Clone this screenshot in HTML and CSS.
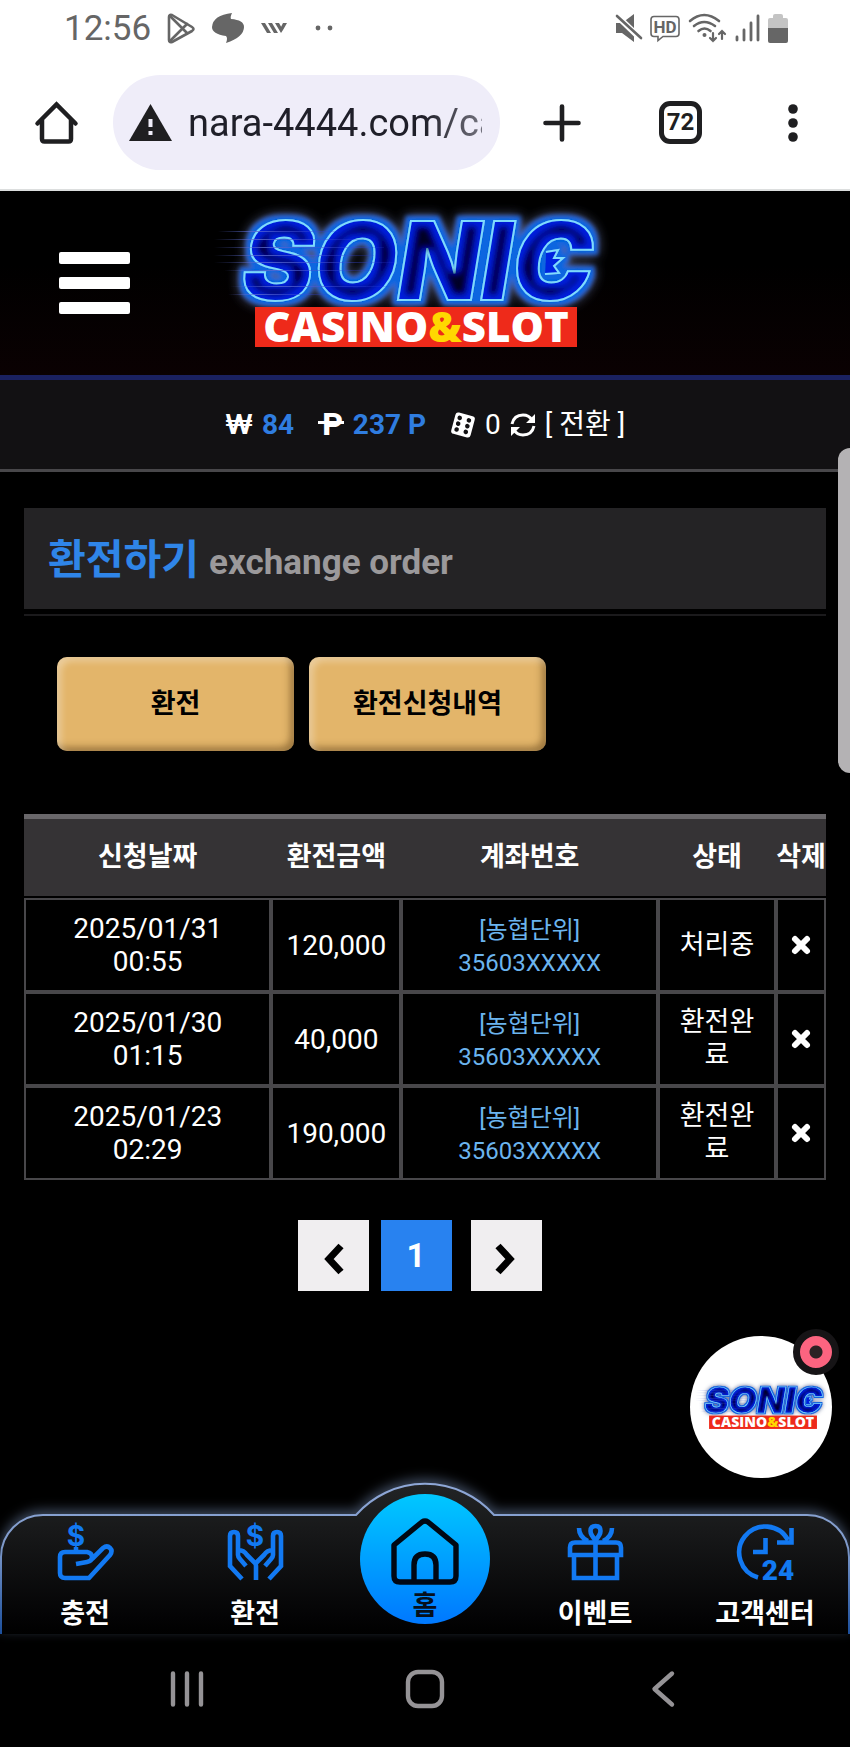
FILE: index.html
```html
<!DOCTYPE html>
<html lang="ko">
<head>
    <meta charset="UTF-8">
    <meta name="viewport" content="width=device-width, initial-scale=1.0">
    <title>SONIC CASINO&amp;SLOT - 환전하기</title>
    <link rel="stylesheet" href="styles.css">
</head>
<body>
    <div class="status-bar">
        <div class="status-left">
            <span class="clock">12:56</span>
            <svg width="28" height="31" viewBox="0 0 28 31" fill="none" stroke="#666" stroke-width="2.6" stroke-linejoin="round" stroke-linecap="round">
                <path d="M2 4v23q0 3 3 2L25 18q3-2 0-4L5 2Q2 1 2 4z"/>
                <path d="M3 3l17 17M3 28l17-17"/>
            </svg>
            <svg width="34" height="32" viewBox="0 0 34 32" fill="#666">
                <path d="M21 1q-2 4-1 6 13 1 13 8 0 10-18 16 2-5 0-7Q1 22 1 15 2 3 21 1z"/>
            </svg>
            <svg width="26" height="12" viewBox="0 0 26 12" fill="#666">
                <path d="M0 1h4l6 10H6zM7 1h4l6 10h-4zM14 1h4l4 7-2 3zM22 1h4l-4 7-2-3z"/>
            </svg>
            <svg class="dots" width="18" height="6" viewBox="0 0 18 6" fill="#666">
                <circle cx="3" cy="3" r="2.4"/><circle cx="15" cy="3" r="2.4"/>
            </svg>
        </div>
        <div class="status-right">
            <svg width="27" height="30" viewBox="0 0 27 30" fill="#666">
                <path d="M1 10h6L19 1v28L7 20H1z"/>
                <path d="M1 2l25 24" stroke="#fff" stroke-width="6"/>
                <path d="M2 3l24 22" stroke="#666" stroke-width="2.6" stroke-linecap="round"/>
            </svg>
            <svg width="30" height="27" viewBox="0 0 30 27">
                <path d="M4 1.500h22q3 0 3 3v14q0 3-3 3H13l-5 4v-4H4q-3 0-3-3v-14q0-3 3-3z" fill="none" stroke="#666" stroke-width="1.6"/>
                <text class="hd" x="15" y="18" text-anchor="middle">HD</text>
            </svg>
            <svg width="39" height="30" viewBox="0 0 39 30" fill="none" stroke="#666" stroke-width="2.6" stroke-linecap="round">
                <path d="M2 8q14-12 29 0M6 13q10-8 21 0M10.500 18q6-5 12 0"/>
                <circle cx="16.500" cy="22" r="2" fill="#666" stroke="none"/>
                <path d="M25 20v8M22 25l3 3 3-3M34 26v-8M31 21l3-3 3 3" stroke-width="2.2"/>
            </svg>
            <svg width="25" height="28" viewBox="0 0 25 28" stroke="#666" stroke-width="2.8" stroke-linecap="round">
                <path d="M2 23v3M9 16v10M16 9v17M23 2v24"/>
            </svg>
            <svg width="20" height="29" viewBox="0 0 20 29">
                <path d="M0 6q0-2 2-2h3V2q0-2 2-2h6q2 0 2 2v2h3q2 0 2 2v9H0z" fill="#c4c4c4"/>
                <path d="M0 14h20v13q0 2-2 2H2q-2 0-2-2z" fill="#666"/>
            </svg>
        </div>
    </div>

    <div class="browser-bar">
        <button class="bar-btn" type="button" aria-label="홈페이지">
            <svg width="43" height="43" viewBox="0 0 43 43" fill="none" stroke="#1f1f21" stroke-width="4.500">
                <path d="M2.500 22.500L21.500 3.500l19 19" stroke-linecap="round"/>
                <path d="M7 19v19q0 2.500 2.500 2.500h24q2.500 0 2.500-2.500V19"/>
            </svg>
        </button>
        <label class="address">
            <svg width="43" height="37" viewBox="0 0 43 37" fill="#1f1f21" aria-hidden="true">
                <path d="M21.500 0L43 37H0z"/>
                <path d="M19.500 15h4v8h-4zM19.500 27h4v4h-4z" fill="#efedf9"/>
            </svg>
            <input type="text" value="nara-4444.com/casino" aria-label="주소">
        </label>
        <div class="bar-actions">
            <button class="bar-btn" type="button" aria-label="새 탭">
                <svg width="38" height="38" viewBox="0 0 38 38" stroke="#1f1f21" stroke-width="4.600" stroke-linecap="round">
                    <path d="M19 2.500v33M2.500 19h33"/>
                </svg>
            </button>
            <button class="bar-btn tabs" type="button">72</button>
            <button class="bar-btn more" type="button" aria-label="더보기">
                <svg width="26" height="40" viewBox="0 0 26 40" fill="#1f1f21">
                    <circle cx="13" cy="6" r="4.800"/><circle cx="13" cy="20" r="4.800"/><circle cx="13" cy="34" r="4.800"/>
                </svg>
            </button>
        </div>
    </div>

    <header>
        <button class="menu-btn" type="button" aria-label="메뉴"><span></span><span></span><span></span></button>
        <a class="logo" href="#" aria-label="SONIC CASINO&amp;SLOT">
            <svg width="400" height="146" viewBox="0 0 400 146">
                <defs>
                    <linearGradient id="speed" x1="0" y1="0" x2="1" y2="0">
                        <stop offset="0" stop-color="#5a6ad0" stop-opacity="0"/>
                        <stop offset="0.3" stop-color="#5a6ad0" stop-opacity="0.8"/>
                        <stop offset="1" stop-color="#2a3ad8" stop-opacity="0.2"/>
                    </linearGradient>
                    <!-- blue rim, soft halo outside, dark core inside the letters -->
                    <filter id="neon" x="-10%" y="-30%" width="120%" height="160%">
                        <feMorphology in="SourceAlpha" operator="dilate" radius="4" result="fat"/>
                        <feGaussianBlur in="fat" stdDeviation="6" result="haloShape"/>
                        <feFlood flood-color="#5f6c94"/>
                        <feComposite in2="haloShape" operator="in" result="halo"/>
                        <feGaussianBlur in="fat" stdDeviation="2" result="rimShape"/>
                        <feFlood flood-color="#0a66e0"/>
                        <feComposite in2="rimShape" operator="in" result="rim"/>
                        <feMorphology in="SourceAlpha" operator="erode" radius="6" result="thin"/>
                        <feGaussianBlur in="thin" stdDeviation="3" result="coreShape"/>
                        <feFlood flood-color="#000028"/>
                        <feComposite in2="coreShape" operator="in" result="core"/>
                        <feMerge>
                            <feMergeNode in="halo"/>
                            <feMergeNode in="rim"/>
                            <feMergeNode in="SourceGraphic"/>
                            <feMergeNode in="core"/>
                        </feMerge>
                    </filter>
                </defs>
                <g id="logo">
                    <g class="logo-word" filter="url(#neon)">
                        <text x="32" y="90">SONIC</text>
                        <path d="M336 42l12-2-4 8 9 0-9 8 5 7-14 1"/>
                    </g>
                    <g fill="url(#speed)">
                        <rect x="8" y="21" width="120" height="1"/>
                        <rect x="4" y="29" width="150" height="1"/>
                        <rect x="4" y="37" width="170" height="1"/>
                        <rect x="4" y="45" width="160" height="1"/>
                        <rect x="4" y="52" width="180" height="1"/>
                        <rect x="14" y="60" width="150" height="1"/>
                        <rect x="20" y="76" width="160" height="1"/>
                        <rect x="18" y="84" width="100" height="1"/>
                    </g>
                    <rect x="45" y="97" width="322" height="40" fill="#ee2a1a"/>
                    <text class="logo-sub" x="206" y="132" text-anchor="middle">CASINO<tspan fill="#ffd800">&amp;</tspan>SLOT</text>
                </g>
            </svg>
        </a>
    </header>

    <div class="wallet">
        <div class="wallet-item"><span class="won">₩</span><b>84</b></div>
        <div class="wallet-item"><span class="point">P</span><b>237 P</b></div>
        <div class="wallet-item">
            <svg width="26" height="26" viewBox="0 0 26 26">
                <g transform="rotate(15 13 13)">
                    <rect x="3" y="2" width="20" height="22" rx="3" fill="#fff"/>
                    <g fill="#121113">
                        <circle cx="8" cy="7" r="2.300"/><circle cx="8" cy="13" r="2.300"/><circle cx="8" cy="19" r="2.300"/>
                        <circle cx="17.500" cy="7" r="2.300"/><circle cx="17.500" cy="13" r="2.300"/><circle cx="17.500" cy="19" r="2.300"/>
                    </g>
                </g>
            </svg>
            <span>0</span>
            <svg width="26" height="26" viewBox="0 0 26 26" fill="none" stroke="#fff" stroke-width="3">
                <path d="M2 12Q4 3 13 3q6 0 9 5M24 14q-2 9-11 9-6 0-9-5"/>
                <path d="M25 2v9h-9zM1 24v-9h9z" fill="#fff" stroke="none"/>
            </svg>
            <a href="#">[ 전환 ]</a>
        </div>
    </div>

    <main>
        <div class="page-title">
            <h1>환전하기 <small>exchange order</small></h1>
        </div>

        <div class="tab-buttons">
            <button type="button">환전</button>
            <button type="button">환전신청내역</button>
        </div>

        <table>
            <colgroup>
                <col>
                <col class="col-amount">
                <col class="col-account">
                <col class="col-status">
                <col class="col-delete">
            </colgroup>
            <thead>
                <tr><th>신청날짜</th><th>환전금액</th><th>계좌번호</th><th>상태</th><th>삭제</th></tr>
            </thead>
            <tbody>
                <tr>
                    <td class="date">2025/01/31 00:55</td>
                    <td>120,000</td>
                    <td class="account">[농협단위]<br>35603XXXXX</td>
                    <td class="status">처리중</td>
                    <td><button class="delete" type="button" aria-label="삭제"><svg width="20" height="20" viewBox="0 0 20 20"><path d="M4 4l12 12M16 4L4 16"/></svg></button></td>
                </tr>
                <tr>
                    <td class="date">2025/01/30 01:15</td>
                    <td>40,000</td>
                    <td class="account">[농협단위]<br>35603XXXXX</td>
                    <td class="status">환전완료</td>
                    <td><button class="delete" type="button" aria-label="삭제"><svg width="20" height="20" viewBox="0 0 20 20"><path d="M4 4l12 12M16 4L4 16"/></svg></button></td>
                </tr>
                <tr>
                    <td class="date">2025/01/23 02:29</td>
                    <td>190,000</td>
                    <td class="account">[농협단위]<br>35603XXXXX</td>
                    <td class="status">환전완료</td>
                    <td><button class="delete" type="button" aria-label="삭제"><svg width="20" height="20" viewBox="0 0 20 20"><path d="M4 4l12 12M16 4L4 16"/></svg></button></td>
                </tr>
            </tbody>
        </table>

        <div class="pagination">
            <a href="#" aria-label="이전"><svg width="24" height="40" viewBox="0 0 24 40"><path d="M20 10L8 23l12 13"/></svg></a>
            <a class="active" href="#">1</a>
            <a class="next" href="#" aria-label="다음"><svg width="24" height="40" viewBox="0 0 24 40"><path d="M4 10l12 13L4 36"/></svg></a>
        </div>
    </main>

    <nav>
        <svg class="nav-shape" viewBox="0 0 850 150" preserveAspectRatio="none" aria-hidden="true">
            <defs>
                <linearGradient id="navFill" x1="0" y1="0" x2="0" y2="1">
                    <stop offset="0" stop-color="#222426"/>
                    <stop offset="0.3" stop-color="#18191a"/>
                    <stop offset="0.9" stop-color="#030304"/>
                    <stop offset="1" stop-color="#000000"/>
                </linearGradient>
                <linearGradient id="navLine" x1="0" y1="0" x2="0" y2="1">
                    <stop offset="0" stop-color="#8fa8d8"/>
                    <stop offset="0.4" stop-color="#7f9aca"/>
                    <stop offset="1" stop-color="#1c4f9c"/>
                </linearGradient>
            </defs>
            <path d="M1 150V73A42 42 0 0 1 43 31H356A92 92 0 0 1 494 31H807A42 42 0 0 1 849 73V150" fill="url(#navFill)" stroke="url(#navLine)" stroke-width="2"/>
        </svg>
        <a href="#">
            <svg width="57" height="57" viewBox="0 0 57 57">
                <path d="M19 40l11-2q5-1 5-5t-5-5H8q-5 0-5 5v16q0 5 5 5h24L53 31q3-4 0-7t-7 0L35 35M19 23v5"/>
                <text x="19" y="22" text-anchor="middle">$</text>
            </svg>
            <span>충전</span>
        </a>
        <a href="#">
            <svg width="57" height="57" viewBox="0 0 57 57">
                <path d="M15 55L3 42V12q0-4 4-4t4 4v14q6 0 9 5l8 8q1 1 1 3v14M11 26v5q0 2 2 4l6 7"/>
                <path d="M42 55l12-13V12q0-4-4-4t-4 4v14q-6 0-9 5l-8 8M46 26v5q0 2-2 4l-6 7"/>
                <text x="28" y="22" text-anchor="middle">$</text>
            </svg>
            <span>환전</span>
        </a>
        <a class="home" href="#">
            <svg width="68" height="68" viewBox="0 0 68 68">
                <path d="M3 27L31 4q3-2 6 0l28 23v31q0 6-6 6H9q-6 0-6-6zM23 64V47q0-11 11-11t11 11v17"/>
            </svg>
            <span>홈</span>
        </a>
        <a href="#">
            <svg width="57" height="57" viewBox="0 0 57 57">
                <path d="M8 18.500h41q5 0 5 5V31H3v-7.500q0-5 5-5zM7 31v23h43V31M28.500 18v36M28.500 16q-5-5-5-9 0-5 5-5t5 5q0 4-5 9zM12 4q0 9 9 13M45 4q0 9-9 13"/>
            </svg>
            <span>이벤트</span>
        </a>
        <a href="#">
            <svg width="57" height="57" viewBox="0 0 57 57">
                <path d="M21 53.500A26 26 0 1 1 51 16M54.500 4v14.500H40M28.500 14v14H16"/>
                <text class="hours" x="41" y="56" text-anchor="middle">24</text>
            </svg>
            <span>고객센터</span>
        </a>
    </nav>

    <div class="system-bar">
        <button type="button" aria-label="최근 앱"><svg width="40" height="40" viewBox="0 0 40 40"><path d="M6 4.500v31M20 4.500v31M34 4.500v31"/></svg></button>
        <button type="button" aria-label="홈"><svg width="40" height="40" viewBox="0 0 40 40"><rect x="3" y="3" width="34" height="34" rx="10"/></svg></button>
        <button type="button" aria-label="뒤로"><svg width="40" height="40" viewBox="0 0 40 40"><path d="M29 4.500L11.500 20 29 35.500"/></svg></button>
    </div>

    <button class="chat" type="button" aria-label="상담">
        <svg width="134" height="49" viewBox="0 0 400 146"><use href="#logo"/></svg>
        <span class="chat-badge"></span>
    </button>
    <div class="scroll-thumb"></div>
</body>
</html>
```
FILE: styles.css
```css
* {
    box-sizing: border-box;
}

body {
    margin: 0;
    min-height: 100vh;
    position: relative;
    display: flex;
    flex-direction: column;
    background: #000;
    color: #fff;
    font-family: Roboto, "Noto Sans CJK KR", sans-serif;
    font-size: 28px;
    line-height: 33px;
    overflow-x: hidden;
}

a {
    color: inherit;
    text-decoration: none;
}

button {
    font: inherit;
    border: none;
    padding: 0;
    cursor: pointer;
}

svg {
    flex: none;
    display: block;
    overflow: visible;
}

/* logo */
.logo-word {
    fill: #0022e0;
    stroke: #7fdcff;
    stroke-width: 2;
}

.logo-word text {
    font-family: Inter, sans-serif;
    font-size: 108px;
    font-weight: 900;
    font-style: italic;
}

.logo-sub {
    font-family: "Open Sans", sans-serif;
    font-size: 42px;
    font-weight: 800;
    fill: #fff;
}

/* status bar */
.status-bar {
    height: 56px;
    padding: 0 62px 0 64px;
    display: flex;
    justify-content: space-between;
    align-items: center;
    background: #fff;
    color: #666;
}

.status-left,
.status-right {
    display: flex;
    align-items: center;
    gap: 16px;
}

.status-right {
    gap: 8px;
}

.clock {
    font-size: 35px;
}

.dots {
    margin-left: 12px;
}

.hd {
    font-size: 17px;
    font-weight: 700;
    fill: #666;
}

/* browser toolbar */
.browser-bar {
    height: 135px;
    padding: 0 44px 0 35px;
    display: flex;
    align-items: center;
    background: #fff;
    border-bottom: 2px solid #dcdede;
}

.bar-btn {
    background: none;
    color: #1f1f21;
}

.address {
    flex: 1;
    min-width: 0;
    height: 95px;
    margin: 0 43px 0 35px;
    padding: 0 18px 0 16px;
    display: flex;
    align-items: center;
    gap: 16px;
    border-radius: 48px;
    background: #efedf9;
}

.address input {
    flex: 1;
    min-width: 0;
    height: 60px;
    padding: 0;
    border: none;
    outline: none;
    background: none;
    color: #1f1f29;
    font: 38px Roboto, sans-serif;
    mask-image: linear-gradient(to right, #000 80%, rgba(0, 0, 0, 0.6));
}

.bar-actions {
    display: flex;
    align-items: center;
    gap: 78px;
}

.tabs {
    width: 43px;
    height: 43px;
    border: 5px solid #1f1f21;
    border-radius: 11px;
    font-size: 24px;
    font-weight: 700;
}

/* site header */
header {
    height: 189px;
    padding-left: 59px;
    display: flex;
    align-items: center;
    gap: 80px;
    background: linear-gradient(#000 40%, #0a0102);
    border-bottom: 5px solid #1a2160;
}

.menu-btn {
    width: 71px;
    display: grid;
    gap: 13px;
    background: none;
}

.menu-btn span {
    height: 12px;
    border-radius: 2px;
    background: #fff;
}

/* balance */
.wallet {
    height: 92px;
    display: flex;
    justify-content: center;
    align-items: center;
    gap: 24px;
    background: #121113;
    border-bottom: 3px solid #48474a;
}

.wallet-item {
    display: flex;
    align-items: center;
    gap: 9px;
}

.wallet b {
    color: #2f7de0;
}

.won {
    font-family: Inter, sans-serif;
    font-size: 27px;
    font-weight: 700;
}

.point {
    position: relative;
    padding: 0 1px 0 4px;
    font-size: 32px;
    font-weight: 800;
}

.point::before {
    content: "";
    position: absolute;
    left: 0;
    right: 0;
    top: 13px;
    height: 3px;
    background: #fff;
}

/* content */
main {
    flex: 1;
    padding: 36px 24px;
}

.page-title {
    padding-bottom: 5px;
    border-bottom: 2px solid #1b1a1c;
}

h1 {
    margin: 0;
    height: 101px;
    padding: 2px 0 0 24px;
    background: #242325;
    color: #2f85e8;
    font-size: 41px;
    font-weight: 700;
    line-height: 101px;
}

h1 small {
    color: #9b999b;
    font-size: 35px;
}

.tab-buttons {
    margin: 41px 33px 63px;
    display: flex;
    gap: 15px;
}

.tab-buttons button {
    width: 237px;
    height: 94px;
    border-radius: 10px;
    background: #e3b56a;
    box-shadow: inset 4px 4px 7px rgba(255, 255, 255, 0.35), inset -4px -4px 7px rgba(90, 60, 20, 0.5);
    color: #000;
    font-size: 27px;
    font-weight: 700;
}

table {
    width: 100%;
    table-layout: fixed;
    border-collapse: separate;
    border-spacing: 0;
    text-align: center;
}

.col-amount {
    width: 130px;
}

.col-account {
    width: 32%;
}

.col-status {
    width: 118px;
}

.col-delete {
    width: 50px;
}

th {
    height: 84px;
    padding: 0;
    background: #353335;
    background-clip: padding-box;
    border-top: 5px solid #69676a;
    border-bottom: 2px solid #000;
    font-size: 27px;
    font-weight: 700;
    white-space: nowrap;
}

td {
    height: 94px;
    padding: 0;
    border: 2px solid #48474a;
}

.date {
    padding: 0 20px;
}

.status {
    padding: 0 14px;
    font-size: 27px;
}

.account {
    padding-top: 3px;
    color: #6bb4ee;
    font-size: 24px;
}

.delete {
    background: none;
}

.delete path {
    stroke: #fff;
    stroke-width: 6;
    stroke-linecap: round;
}

.pagination {
    margin: 40px 11px 0 0;
    display: flex;
    justify-content: center;
    gap: 12px;
}

.pagination a {
    width: 71px;
    height: 71px;
    display: flex;
    justify-content: center;
    align-items: center;
    background: #f0eef0;
    font-size: 33px;
    font-weight: 700;
}

.pagination .active {
    background: #2882f0;
}

.pagination .next {
    margin-left: 7px;
}

.pagination path {
    fill: none;
    stroke: #000;
    stroke-width: 7;
}

/* bottom menu */
nav {
    position: relative;
    height: 119px;
    display: grid;
    grid-template-columns: repeat(5, 1fr);
}

.nav-shape {
    position: absolute;
    left: 0;
    bottom: 0;
    width: 100%;
    height: 150px;
    filter: drop-shadow(0 -4px 6px rgba(150, 180, 230, 0.4));
}

nav a {
    position: relative;
    padding-top: 9px;
    display: flex;
    flex-direction: column;
    align-items: center;
    gap: 17px;
    font-size: 27px;
    font-weight: 700;
    white-space: nowrap;
}

nav a path {
    fill: none;
    stroke: #1279f2;
    stroke-width: 4.6;
}

nav a text {
    font-family: Inter, sans-serif;
    font-size: 28px;
    font-weight: 700;
    fill: #1279f2;
}

nav a .hours {
    font-family: Roboto, sans-serif;
    font-weight: 900;
}

nav .home {
    justify-self: center;
    width: 130px;
    height: 130px;
    margin-top: -21px;
    padding-top: 24px;
    gap: 4px;
    border-radius: 50%;
    background: linear-gradient(#00c8ff, #0078ff);
    color: #06101c;
    line-height: 32px;
}

nav .home path {
    stroke: #000814;
    stroke-width: 5.4;
    stroke-linejoin: round;
}

/* android buttons */
.system-bar {
    height: 113px;
    padding: 0 8% 3px;
    display: grid;
    grid-template-columns: repeat(3, 1fr);
    align-items: center;
    justify-items: center;
}

.system-bar button {
    background: none;
}

.system-bar svg {
    fill: none;
    stroke: #959396;
    stroke-width: 4.4;
    stroke-linecap: round;
    stroke-linejoin: round;
}

/* floating chat */
.chat {
    position: absolute;
    right: 18px;
    bottom: 269px;
    width: 142px;
    height: 142px;
    display: flex;
    justify-content: center;
    align-items: center;
    border-radius: 50%;
    background: #fff;
}

.chat-badge {
    position: absolute;
    top: -7px;
    right: -7px;
    width: 46px;
    height: 46px;
    border: 7px solid #161416;
    border-radius: 50%;
    background: radial-gradient(circle, #2b2224 6px, #fc6480 7px);
}

.scroll-thumb {
    position: absolute;
    right: 0;
    top: 448px;
    width: 12px;
    height: 325px;
    border-radius: 12px 0 0 12px;
    background: #b4b2b4;
}
```
